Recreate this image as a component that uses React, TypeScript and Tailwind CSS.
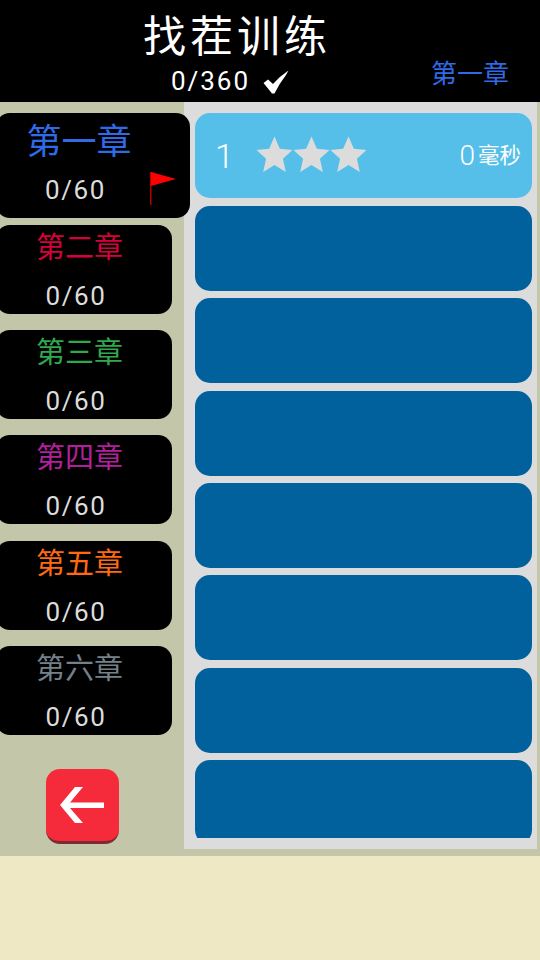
const font = { fontFamily: 'Roboto, "Noto Sans CJK SC", sans-serif' };

const chapters = [
  { name: "第二章", color: "text-[#d6003c]" },
  { name: "第三章", color: "text-[#2fa84f]" },
  { name: "第四章", color: "text-[#b0209c]" },
  { name: "第五章", color: "text-[#ff6a10]" },
  { name: "第六章", color: "text-[#74808a]" },
];

function Star() {
  return (
    <svg viewBox="0 0 36 36" className="h-[37px] w-[37px]">
      <path d="M18 0.5 L23.2 12.4 L35.5 13.6 L26.2 22.1 L29 35 L18 28.2 L7 35 L9.8 22.1 L0.5 13.6 L12.8 12.4 Z" fill="#dcdcdc" />
    </svg>
  );
}

function ChapterCard({ name, color }: { name: string; color: string }) {
  return (
    <div className="-ml-[4px] flex h-[89px] w-[176px] flex-col items-center rounded-[14px] bg-black pr-[9px]">
      <div className={`mt-[3px] text-[29px] font-normal leading-[40px] ${color}`}>{name}</div>
      <div className="mt-[12px] pr-[7px] text-[26px] font-normal leading-[32px] tracking-[1.6px] text-[#dcdcdc]">0/60</div>
    </div>
  );
}

export default function App() {
  return (
    <div style={font} className="flex h-[960px] w-[540px] flex-col overflow-hidden bg-[#eee8c5]">
      <header className="relative flex h-[102px] shrink-0 flex-col items-center bg-black pr-[66px]">
        <h1 className="mt-[10px] text-[43px] font-normal leading-[54px] tracking-[4px] text-white">找茬训练</h1>
        <div className="-mt-[1px] flex items-center gap-[13px] pr-[14px]">
          <span className="text-[26px] font-normal leading-[36px] tracking-[2px] text-white">0/360</span>
          <svg viewBox="0 0 26 24" className="mt-[1px] h-[24px] w-[26px]">
            <path d="M0.5 13 L5 9.5 L10 14 Q17 6 25.5 0.5 L23 5 Q16 14 11.5 23.5 L9 23.5 Z" fill="#fff" />
          </svg>
        </div>
        <div className="absolute left-[431px] top-[56px] text-[26px] font-normal leading-[36px] text-[#2f6be6]">第一章</div>
      </header>

      <main className="flex h-[754px] shrink-0 items-start bg-[#c3c6a8]">
        <aside className="z-10 flex w-[184px] shrink-0 flex-col pt-[11px]">
          <div className="relative -ml-[4px] flex h-[105px] w-[194px] flex-col items-center rounded-[14px] bg-black pr-[28px]">
            <div className="mt-[8px] text-[35px] font-normal leading-[44px] text-[#2f6be6]">第一章</div>
            <div className="mt-[9px] pr-[7px] text-[26px] font-normal leading-[32px] tracking-[1.6px] text-[#dcdcdc]">0/60</div>
            <svg viewBox="0 0 26 33" className="absolute left-[154px] top-[59px] h-[33px] w-[26px]">
              <rect x="0" y="0" width="1.5" height="33" fill="#b30000" />
              <path d="M1 0 L26 7 L1 14 Z" fill="#ff0000" />
            </svg>
          </div>
          <div className="mt-[7px] flex flex-col gap-[16.2px]">
            {chapters.map((c) => (
              <ChapterCard key={c.name} name={c.name} color={c.color} />
            ))}
          </div>
          <button className="ml-[46px] mt-[34.2px] flex h-[75px] w-[73px] items-center justify-center rounded-[14px] border-b-[3px] border-[#7d2a30] bg-[#f52a3a]">
            <svg viewBox="0 0 44 36" className="h-[36px] w-[44px] -ml-[2px]">
              <path d="M23 0 L10 15.5 H44 V21 H10 L23 36 H15 L0 18 L15 0 Z" fill="#fff" />
            </svg>
          </button>
        </aside>

        <section className="h-[747px] w-[353px] shrink-0 overflow-hidden bg-[#dcdcdc] px-[11px] pt-[11.4px] pr-[5px]">
          <div className="flex h-[724.6px] flex-col gap-[7.4px] overflow-hidden">
            <div className="flex h-[85px] shrink-0 items-center rounded-[15px] bg-[#56bfe9] pl-[20px] pr-[11px]">
              <span className="w-[41px] text-[34px] font-light leading-none text-white">1</span>
              <div className="-mt-[3px] flex">
                <Star />
                <Star />
                <Star />
              </div>
              <span className="ml-auto text-[28px] font-light leading-none text-white">0</span>
              <span className="ml-[3px] text-[21.5px] font-normal leading-none text-white">毫秒</span>
            </div>
            {[0, 1, 2, 3, 4, 5, 6].map((i) => (
              <div key={i} className="h-[85px] shrink-0 rounded-[15px] bg-[#01619c]" />
            ))}
          </div>
        </section>
      </main>
    </div>
  );
}
